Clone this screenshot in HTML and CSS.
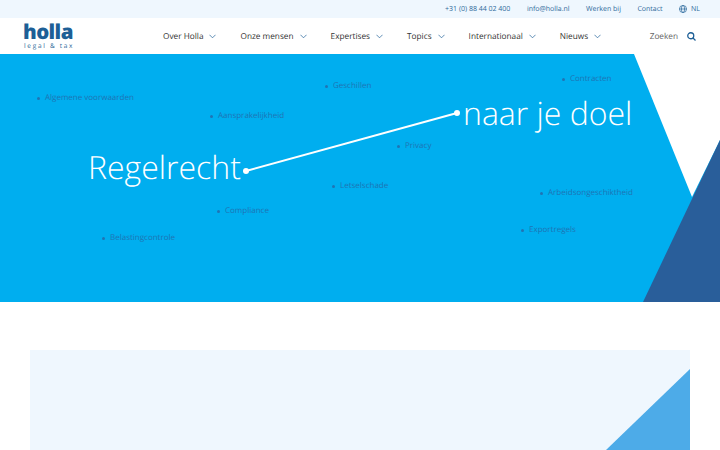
FILE: index.html
```html
<!DOCTYPE html>
<html lang="en">
<head>
    <meta charset="UTF-8">
    <meta name="viewport" content="width=device-width, initial-scale=1.0">
    <title>Holla legal &amp; tax</title>
    <link rel="stylesheet" href="styles.css">
</head>
<body>
    <!-- Top bar -->
    <div class="top-bar">
        <a>+31 (0) 88 44 02 400</a>
        <a>info@holla.nl</a>
        <a>Werken bij</a>
        <a>Contact</a>
        <a class="lang">
            <svg width="8" height="8" viewBox="0 0 18 18" fill="none" stroke="#1d5f96" stroke-width="1.5">
                <circle cx="9" cy="9" r="8"/>
                <ellipse cx="9" cy="9" rx="3.6" ry="8"/>
                <path d="M1 9h16"/>
            </svg>
            NL
        </a>
    </div>

    <!-- Main nav -->
    <header class="main-nav">
        <div class="logo">
            <span class="logo-name">holla</span>
            <span class="logo-sub">legal &amp; tax</span>
        </div>
        <nav class="menu">
            <a>Over Holla <svg class="chev" viewBox="0 0 8 5"><path d="M.5.5 4 4 7.500.5"/></svg></a>
            <a>Onze mensen <svg class="chev" viewBox="0 0 8 5"><path d="M.5.5 4 4 7.500.5"/></svg></a>
            <a>Expertises <svg class="chev" viewBox="0 0 8 5"><path d="M.5.5 4 4 7.500.5"/></svg></a>
            <a>Topics <svg class="chev" viewBox="0 0 8 5"><path d="M.5.5 4 4 7.500.5"/></svg></a>
            <a>Internationaal <svg class="chev" viewBox="0 0 8 5"><path d="M.5.5 4 4 7.500.5"/></svg></a>
            <a>Nieuws <svg class="chev" viewBox="0 0 8 5"><path d="M.5.5 4 4 7.500.5"/></svg></a>
        </nav>
        <div class="search">
            Zoeken
            <svg width="9" height="9" viewBox="0 0 18 18" fill="none" stroke="#1d5f96" stroke-width="2.6">
                <circle cx="7.500" cy="7.500" r="6"/>
                <path d="M12 12l5 5"/>
            </svg>
        </div>
    </header>

    <!-- Hero -->
    <section class="hero">
        <svg class="hero-shapes" width="720" height="248" viewBox="0 0 720 248">
            <polygon points="634,0 720,0 720,86 692,143" fill="#fff"/>
            <polygon points="720,86 720,248 643,248" fill="#295e9a"/>
            <line x1="246" y1="117" x2="457" y2="59" stroke="#fff" stroke-width="2"/>
            <circle cx="246" cy="117" r="3" fill="#fff"/>
            <circle cx="457" cy="59" r="3" fill="#fff"/>
        </svg>

        <h1 class="word word-left">Regelrecht</h1>
        <h1 class="word word-right">naar je doel</h1>

        <ul class="tags">
            <li style="left: 37px; top: 37px">Algemene voorwaarden</li>
            <li style="left: 210px; top: 55px">Aansprakelijkheid</li>
            <li style="left: 325px; top: 25px">Geschillen</li>
            <li style="left: 562px; top: 18px">Contracten</li>
            <li style="left: 397px; top: 85px">Privacy</li>
            <li style="left: 332px; top: 125px">Letselschade</li>
            <li style="left: 540px; top: 132px">Arbeidsongeschiktheid</li>
            <li style="left: 217px; top: 150px">Compliance</li>
            <li style="left: 521px; top: 169px">Exportregels</li>
            <li style="left: 102px; top: 177px">Belastingcontrole</li>
        </ul>
    </section>

    <!-- Card below hero -->
    <section class="content">
        <div class="card">
            <svg class="card-shape" width="84" height="81" viewBox="0 0 84 81">
                <polygon points="84,0 84,81 0,81" fill="#4dabe8"/>
            </svg>
        </div>
    </section>
</body>
</html>
```

FILE: styles.css
```css
body {
    font-family: "Open Sans", sans-serif;
    text-rendering: geometricPrecision;
    margin: 0;
    height: 450px;
    overflow: hidden;
    background: #fff;
}

.top-bar {
    height: 18px;
    background-color: #eff7fe;
    display: flex;
    justify-content: flex-end;
    align-items: center;
    gap: 16.5px;
    padding-right: 20px;
    font-size: 7px;
    color: #2f6b9c;
}

.lang {
    display: flex;
    align-items: center;
    gap: 4px;
}

.main-nav {
    height: 36px;
    display: flex;
    align-items: center;
    padding: 0 24px;
}

.logo {
    display: flex;
    flex-direction: column;
    width: 139px;
    color: #1d5f96;
}

.logo-name {
    font-family: "Open Sans", sans-serif;
    font-weight: 800;
    font-size: 20.5px;
    line-height: 18px;
    letter-spacing: -0.6px;
    margin-left: -1px;
}

.logo-sub {
    font-family: "Open Sans", sans-serif;
    font-size: 6.5px;
    line-height: 9px;
    letter-spacing: 1.7px;
}

.menu {
    display: flex;
    gap: 24px;
    font-size: 8.25px;
    color: #333;
}

.menu a {
    display: flex;
    align-items: center;
    gap: 6px;
}

.chev {
    width: 7px;
    height: 5px;
    fill: none;
    stroke: #1d5f96;
    stroke-width: 0.8;
}

.search {
    margin-left: auto;
    display: flex;
    align-items: center;
    gap: 9px;
    font-size: 8.25px;
    color: #666;
}

.hero {
    position: relative;
    height: 248px;
    background-color: #00aeef;
    overflow: hidden;
}

.hero-shapes {
    position: absolute;
    left: 0;
    top: 0;
}

.word {
    position: absolute;
    margin: 0;
    font-weight: 300;
    color: #fff;
    white-space: nowrap;
}

.word-left {
    left: 88px;
    top: 90px;
    font-size: 32px;
    line-height: 48px;
}

.word-right {
    left: 463px;
    top: 36px;
    font-size: 32px;
    line-height: 48px;
}

.tags {
    list-style: none;
    margin: 0;
    padding: 0;
}

.tags li {
    position: absolute;
    padding-left: 8px;
    font-size: 8px;
    line-height: 14px;
    color: #1f74b4;
    white-space: nowrap;
}

.tags li::before {
    content: "";
    position: absolute;
    left: 0;
    top: 6px;
    width: 3px;
    height: 3px;
    border-radius: 50%;
    background-color: #1f74b4;
}

.content {
    padding: 48px 30px 0;
}

.card {
    position: relative;
    height: 100px;
    background-color: #eff7fe;
    overflow: hidden;
}

.card-shape {
    position: absolute;
    right: 0;
    top: 19px;
}
```
